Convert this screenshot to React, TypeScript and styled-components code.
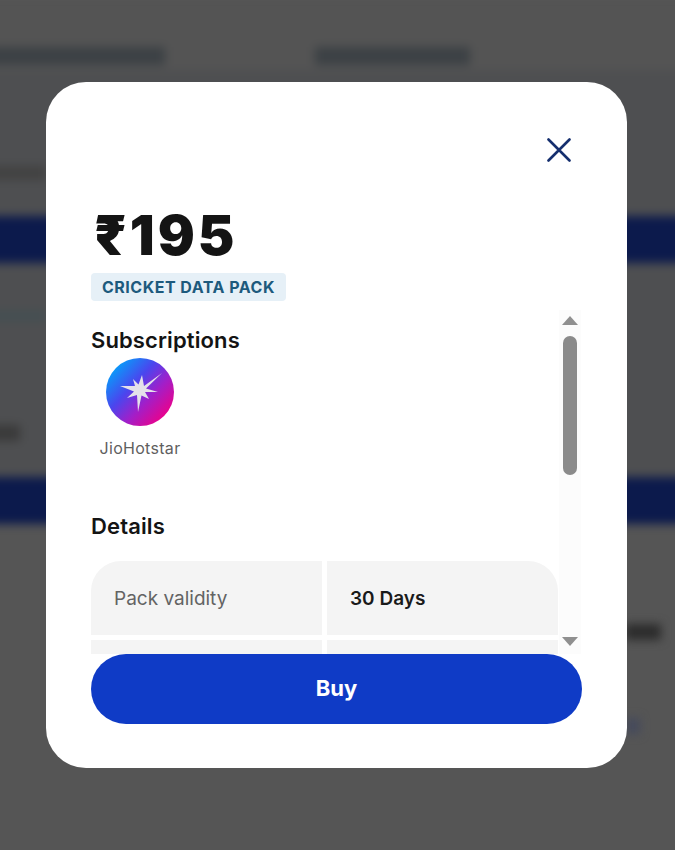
import React from "react";
import styled, { createGlobalStyle } from "styled-components";

const GlobalStyle = createGlobalStyle`
  html, body {
    margin: 0;
    padding: 0;
    background: #555555;
    font-family: Inter, "Liberation Sans", sans-serif;
  }
`;

const details = [
  { id: "validity", label: "Pack validity", value: "30 Days" },
  { id: "next", label: "", value: "" },
];

const Star: React.FC = () => (
  <svg width="68" height="68" viewBox="0 0 68 68">
    <defs>
      <linearGradient id="hotstar" x1="0.08" y1="0.12" x2="0.88" y2="0.88">
        <stop offset="0" stopColor="#00a6fb" />
        <stop offset="0.38" stopColor="#4a46ee" />
        <stop offset="0.66" stopColor="#a11fc9" />
        <stop offset="1" stopColor="#ee0088" />
      </linearGradient>
    </defs>
    <circle cx="34" cy="34" r="34" fill="url(#hotstar)" />
    <polygon
      fill="#e4e1ea"
      points="56,15 38,28 36,17 32.5,26.5 27,21 29,28 14,28 28,33.5 21,40 31,37 32,54 35.5,37.5 43,41 39,34 52,34 40,30.5"
    />
  </svg>
);

export default function App() {
  return (
    <>
      <GlobalStyle />
      <Page>
        <Backdrop>
          <TabRow>
            <Smudge $width={177} />
            <Smudge $width={155} />
          </TabRow>
          <Middle>
            <SideText />
            <Band $top={36} />
            <TealLine />
            <SideTextSmall />
            <Band $top={36} />
          </Middle>
          <FooterLine>
            <Smudge $width={36} $height={16} $color="#2c2c2c" />
          </FooterLine>
          <FooterLink>
            <Smudge $width={14} $height={16} $color="#454a5c" />
          </FooterLink>
        </Backdrop>

        <Modal>
          <CloseRow>
            <CloseButton aria-label="Close">
              <svg width="24" height="24" viewBox="0 0 24 24" fill="none">
                <path
                  d="M1.5 1.5 22.5 22.5M22.5 1.5 1.5 22.5"
                  stroke="#152f6e"
                  strokeWidth="2.6"
                  strokeLinecap="round"
                />
              </svg>
            </CloseButton>
          </CloseRow>

          <Price>₹195</Price>
          <Chip>CRICKET DATA PACK</Chip>

          <ScrollArea>
            <ScrollContent>
              <SectionTitle>Subscriptions</SectionTitle>
              <Ott>
                <Star />
                <OttName>JioHotstar</OttName>
              </Ott>
              <DetailsTitle>Details</DetailsTitle>
              <Table>
                {details.map((row) => (
                  <React.Fragment key={row.id}>
                    <LabelCell>{row.label}</LabelCell>
                    <ValueCell>{row.value}</ValueCell>
                  </React.Fragment>
                ))}
              </Table>
            </ScrollContent>
            <Track>
              <ArrowUp />
              <Thumb />
              <ArrowDown />
            </Track>
          </ScrollArea>

          <BuyButton>Buy</BuyButton>
        </Modal>
      </Page>
    </>
  );
}

const Page = styled.div`
  position: relative;
  width: 675px;
  height: 850px;
  overflow: hidden;
  background: #555555;
`;

const Backdrop = styled.div`
  display: flex;
  flex-direction: column;
  height: 100%;
  margin: 0 -12px;
  filter: blur(5px);
`;

const TabRow = styled.div`
  display: flex;
  gap: 150px;
  height: 70px;
  box-sizing: border-box;
  padding-top: 47px;
  background: #545454;
`;

const Smudge = styled.div<{ $width: number; $height?: number; $color?: string }>`
  width: ${(p) => p.$width}px;
  height: ${(p) => p.$height ?? 18}px;
  background: ${(p) => p.$color ?? "#3c4145"};
`;

const Middle = styled.div`
  display: flex;
  flex-direction: column;
  background: #4e4f51;
`;

const SideText = styled.div`
  width: 58px;
  height: 14px;
  margin-top: 96px;
  background: #424242;
`;

const Band = styled.div<{ $top: number }>`
  height: 47px;
  margin-top: ${(p) => p.$top}px;
  background: #0c1a4c;
`;

const TealLine = styled.div`
  width: 58px;
  height: 10px;
  margin-top: 48px;
  background: #444f52;
`;

const SideTextSmall = styled.div`
  width: 32px;
  height: 16px;
  margin-top: 104px;
  background: #3a3a3a;
`;

const FooterLine = styled.div`
  display: flex;
  justify-content: flex-end;
  margin-top: 100px;
  padding-right: 26px;
`;

const FooterLink = styled.div`
  display: flex;
  justify-content: flex-end;
  margin-top: 78px;
  padding-right: 47px;
`;

const Modal = styled.div`
  position: absolute;
  left: 46px;
  top: 82px;
  width: 581px;
  height: 686px;
  box-sizing: border-box;
  padding: 56px 45px 44px;
  display: flex;
  flex-direction: column;
  align-items: flex-start;
  background: #ffffff;
  border-radius: 40px;
`;

const CloseRow = styled.div`
  align-self: stretch;
  display: flex;
  justify-content: flex-end;
  padding-right: 11px;
`;

const CloseButton = styled.button`
  display: flex;
  width: 24px;
  height: 24px;
  padding: 0;
  border: none;
  background: none;
  cursor: pointer;
`;

const Price = styled.div`
  margin-top: 44px;
  padding-left: 3px;
  font-size: 55px;
  line-height: 58px;
  font-weight: 900;
  letter-spacing: 3px;
  color: #141414;
`;

const Chip = styled.div`
  margin-top: 9px;
  height: 28px;
  padding: 0 11px;
  display: flex;
  align-items: center;
  border-radius: 4px;
  background: #e6f0f7;
  color: #1d5a7d;
  font-size: 16px;
  font-weight: 700;
  letter-spacing: 0.5px;
`;

const ScrollArea = styled.div`
  align-self: stretch;
  height: 346px;
  margin-top: 9px;
  display: flex;
  overflow: hidden;
`;

const ScrollContent = styled.div`
  flex: 1;
  padding-top: 17px;
  overflow: hidden;
`;

const SectionTitle = styled.div`
  font-size: 22px;
  line-height: 27px;
  font-weight: 600;
  letter-spacing: 0.12px;
  color: #141414;
`;

const Ott = styled.div`
  width: 98px;
  margin-top: 4px;
  display: flex;
  flex-direction: column;
  align-items: center;
`;

const OttName = styled.div`
  margin-top: 13px;
  font-size: 16px;
  line-height: 18px;
  letter-spacing: 0.3px;
  color: #5f5f5f;
  white-space: nowrap;
`;

const DetailsTitle = styled(SectionTitle)`
  margin-top: 56px;
`;

const Table = styled.div`
  margin-top: 21px;
  width: 467px;
  display: grid;
  grid-template-columns: 1fr 1fr;
  grid-auto-rows: 74px;
  gap: 5px;
  border-radius: 30px 30px 0 0;
  overflow: hidden;
`;

const LabelCell = styled.div`
  padding: 27px 0 0 23px;
  background: #f4f4f4;
  font-size: 19px;
  line-height: 22px;
  color: #636363;
`;

const ValueCell = styled(LabelCell)`
  font-weight: 600;
  color: #1a1a1a;
`;

const Track = styled.div`
  width: 22px;
  margin-right: 1px;
  display: flex;
  flex-direction: column;
  align-items: center;
  background: #fcfcfc;
`;

const ArrowUp = styled.div`
  width: 0;
  height: 0;
  margin-top: 6px;
  border-left: 8.5px solid transparent;
  border-right: 8.5px solid transparent;
  border-bottom: 9px solid #909090;
`;

const Thumb = styled.div`
  width: 14px;
  height: 139px;
  margin-top: 11px;
  border-radius: 7px;
  background: #8b8b8b;
`;

const ArrowDown = styled.div`
  width: 0;
  height: 0;
  margin-top: 162px;
  border-left: 8.5px solid transparent;
  border-right: 8.5px solid transparent;
  border-top: 9px solid #909090;
`;

const BuyButton = styled.button`
  align-self: stretch;
  height: 70px;
  padding: 0 0 2px;
  border: none;
  border-radius: 35px;
  background: #0f3bc6;
  color: #ffffff;
  font-family: inherit;
  font-size: 22px;
  font-weight: 700;
  cursor: pointer;
`;
